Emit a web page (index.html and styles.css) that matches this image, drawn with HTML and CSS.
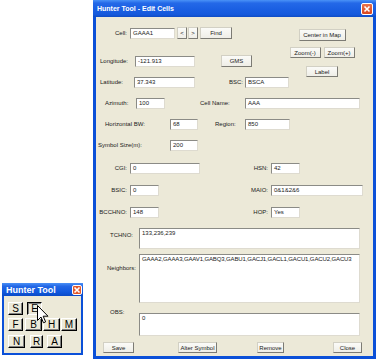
FILE: index.html
```html
<!DOCTYPE html>
<html>
<head>
<meta charset="utf-8">
<link rel="stylesheet" href="styles.css">
</head>
<body>
<div class="desk">
  <div class="side">
    <div class="mini">
      <div class="mtitlebar">
        <span class="mtitle">Hunter Tool</span>
        <span class="mx"><svg width="8" height="8" viewBox="0 0 8 8"><path d="M1.5 1.5 L6.5 6.5 M6.5 1.5 L1.5 6.5" stroke="#fff" stroke-width="1.6"/></svg></span>
      </div>
      <div class="mbody">
        <div class="mrow mr1">
          <span class="kb k15 kfirst">S</span>
          <span class="kb k15 kpressed kgap4">E</span>
        </div>
        <div class="mrow mr2">
          <span class="kb k15 kfirst">F</span>
          <span class="kb k17 kgap2">B</span>
          <span class="kb k17 kgap1">H</span>
          <span class="kb k16 kgap1">M</span>
        </div>
        <div class="mrow mr3">
          <span class="kb k17 kfirst">N</span>
          <span class="kb k13 kgap5">R</span>
          <span class="kb k15 kgap4">A</span>
        </div>
        <svg class="cursor" width="12" height="19" viewBox="0 0 12 19"><path d="M0.5 0.5 L0.5 15.5 L4 12 L6.5 17.8 L8.6 16.9 L6.2 11.2 L11 11.2 Z" fill="#fff" stroke="#000" stroke-width="1"/></svg>
      </div>
    </div>
  </div>

  <div class="win">
    <div class="titlebar">
      <span class="title">Hunter Tool - Edit Cells</span>
      <span class="xbtn"><svg width="8" height="8" viewBox="0 0 8 8"><path d="M1.5 1.5 L6.5 6.5 M6.5 1.5 L1.5 6.5" stroke="#fff" stroke-width="1.6"/></svg></span>
    </div>
    <div class="client">
      <div class="top">
        <div class="topleft">
          <div class="row r1">
            <span class="lbl rt l-cell">Cell:</span>
            <span class="in i-cell">GAAA1</span>
            <span class="btn b-nav b-prev">&lt;</span>
            <span class="btn b-nav b-next">&gt;</span>
            <span class="btn b-find">Find</span>
          </div>
          <div class="row r2">
            <span class="lbl l-lon">Longitude:</span>
            <span class="in i-lon">-121.913</span>
            <span class="btn b-gms">GMS</span>
          </div>
          <div class="row r3">
            <span class="lbl l-lat">Latitude:</span>
            <span class="in i-lat">37.343</span>
            <span class="lbl rt l-bsc">BSC:</span>
            <span class="in i-bsc">BSCA</span>
          </div>
        </div>
        <div class="topright">
          <span class="btn b-center">Center in Map</span>
          <div class="zoomrow">
            <span class="btn b-zoom">Zoom(-)</span>
            <span class="btn b-zoom">Zoom(+)</span>
          </div>
          <span class="btn b-label">Label</span>
        </div>
      </div>

      <div class="row r-az">
        <span class="lbl l-az">Azimuth:</span>
        <span class="in i-az">100</span>
        <span class="lbl l-cname">Cell Name:</span>
        <span class="in i-cname">AAA</span>
      </div>
      <div class="row r-hbw">
        <span class="lbl l-hbw">Horizontal BW:</span>
        <span class="in i-hbw">68</span>
        <span class="lbl l-region">Region:</span>
        <span class="in i-region">850</span>
      </div>
      <div class="row r-sym">
        <span class="lbl l-sym">Symbol Size(m):</span>
        <span class="in i-hbw">200</span>
      </div>
      <div class="row r-cgi">
        <span class="lbl rt l-left">CGI:</span>
        <span class="in i-cgi">0</span>
        <span class="lbl rt l-hsn">HSN:</span>
        <span class="in i-small">42</span>
      </div>
      <div class="row r-bsic">
        <span class="lbl rt l-left">BSIC:</span>
        <span class="in i-small">0</span>
        <span class="lbl rt l-maio">MAIO:</span>
        <span class="in i-maio">0&amp;1&amp;2&amp;6</span>
      </div>
      <div class="row r-bcch">
        <span class="lbl rt l-left">BCCHNO:</span>
        <span class="in i-small">148</span>
        <span class="lbl rt l-maio">HOP:</span>
        <span class="in i-small">Yes</span>
      </div>

      <div class="arow a-tch">
        <span class="lbl l-tch">TCHNO:</span>
        <div class="area h-tch">133,236,239</div>
      </div>
      <div class="arow a-nb">
        <span class="lbl l-nb">Neighbors:</span>
        <div class="area h-nb nbtext">GAAA2,GAAA3,GAAV1,GABQ3,GABU1,GACJ1,GACL1,GACU1,GACU2,GACU3</div>
      </div>
      <div class="arow a-obs">
        <span class="lbl l-obs">OBS:</span>
        <div class="area h-obs">0</div>
      </div>

      <div class="row r-btns">
        <span class="btn b-save">Save</span>
        <span class="btn b-alter">Alter Symbol</span>
        <span class="btn b-remove">Remove</span>
        <span class="btn b-close">Close</span>
      </div>
    </div>
  </div>
</div>
</body>
</html>
```
FILE: styles.css
```css
* { box-sizing: border-box; }
body {
  margin: 0;
  background: #fff;
  font-family: "Liberation Sans", Arial, sans-serif;
  color: #1a1a1a;
}
.desk {
  display: flex;
  width: 376px;
  height: 361px;
  overflow: hidden;
}

/* ---------- small tool window ---------- */
.side {
  width: 93px;
  flex: none;
  display: flex;
  flex-direction: column;
  justify-content: flex-end;
  padding: 0 0 6px 2px;
}
.mini {
  width: 81px;
  height: 72px;
  display: flex;
  flex-direction: column;
}
.mtitlebar {
  height: 13px;
  flex: none;
  background: linear-gradient(to bottom, #4a90f6 0%, #2468e6 25%, #1058de 70%, #0a4ac6 100%);
  display: flex;
  align-items: center;
  padding: 0 1px 0 4px;
}
.mtitle {
  flex: 1;
  color: #fff;
  font-weight: bold;
  font-size: 9px;
  line-height: 10px;
}
.mx {
  width: 10px;
  height: 10px;
  border: 1px solid #fff;
  border-radius: 2px;
  background: #e2582c;
  display: flex;
  align-items: center;
  justify-content: center;
}
.mbody {
  flex: 1;
  position: relative;
  background: #ece9d8;
  border: 2px solid #0b50d8;
  border-top: 0;
  padding-top: 6px;
}
.mrow {
  display: flex;
  height: 13px;
}
.mr2 { margin-top: 3px; }
.mr3 { margin-top: 4px; }
.kb {
  height: 13px;
  display: flex;
  align-items: center;
  justify-content: center;
  font-size: 10px;
  color: #000;
  background: #ece9d8;
  border: 1px solid;
  border-color: #fff #000 #000 #fff;
  box-shadow: inset -1px -1px 0 #808080;
}
.kpressed {
  border-color: #000 #fff #fff #000;
  box-shadow: inset 1px 1px 0 #808080;
}
.k13 { width: 13px; }
.k15 { width: 15px; }
.k16 { width: 16px; }
.k17 { width: 17px; }
.kfirst { margin-left: 4px; }
.kgap1 { margin-left: 1px; }
.kgap2 { margin-left: 2px; }
.kgap4 { margin-left: 4px; }
.kgap5 { margin-left: 5px; }
.cursor {
  position: absolute;
  left: 33px;
  top: 9px;
}

/* ---------- main window ---------- */
.win {
  width: 283px;
  flex: none;
  height: 359px;
  display: flex;
  flex-direction: column;
}
.titlebar {
  height: 17px;
  flex: none;
  background: linear-gradient(to bottom, #4a92f7 0%, #2469e8 18%, #1a5fe2 55%, #1559dc 85%, #0f4cc4 100%);
  display: flex;
  align-items: center;
  padding: 0 3px 0 4px;
}
.title {
  flex: 1;
  color: #fff;
  font-weight: bold;
  font-size: 7px;
  line-height: 9px;
}
.xbtn {
  width: 12px;
  height: 12px;
  border: 1px solid #fff;
  border-radius: 2px;
  background: linear-gradient(#e8734c, #d9461e);
  display: flex;
  align-items: center;
  justify-content: center;
}
.client {
  flex: 1;
  background: #ece9d8;
  border: 3px solid #0b50d8;
  border-top: 0;
  padding-top: 10px;
}

.lbl {
  font-size: 6px;
  line-height: 7px;
  white-space: nowrap;
  flex: none;
}
.rt { text-align: right; padding-right: 3px; }
.in {
  height: 11px;
  flex: none;
  background: #fff;
  border: 1px solid;
  border-color: #8b8b86 #dedbd0 #dedbd0 #8b8b86;
  font-size: 6px;
  line-height: 9px;
  padding-left: 2px;
  white-space: nowrap;
  overflow: hidden;
}
.btn {
  height: 12px;
  flex: none;
  display: flex;
  align-items: center;
  justify-content: center;
  font-size: 6px;
  color: #1a1a1a;
  background: linear-gradient(#fbfbf8, #efeee7);
  border: 1px solid;
  border-color: #d2d0c4 #7c7b74 #7c7b74 #d2d0c4;
  white-space: nowrap;
}

.top { display: flex; }
.topleft { width: 193px; flex: none; }
.topright {
  width: 66px;
  flex: none;
  display: flex;
  flex-direction: column;
  align-items: center;
}
.row { display: flex; align-items: center; height: 11px; }
.r1 { height: 12px; }
.r2 { height: 12px; margin-top: 16px; }
.r3 { margin-top: 10px; }

.l-cell { width: 34px; }
.i-cell { width: 45px; }
.b-nav { width: 10px; }
.b-prev { margin-left: 2px; }
.b-next { margin-left: 1px; }
.b-find { width: 32px; margin-left: 2px; }
.l-lon { margin-left: 4px; width: 35px; }
.i-lon { width: 60px; }
.b-gms { width: 31px; margin-left: 26px; }
.l-lat { margin-left: 4px; width: 34px; }
.i-lat { width: 61px; }
.l-bsc { width: 50px; padding-right: 2px; }
.i-bsc { width: 44px; }

.b-center { width: 47px; margin-top: 2px; }
.zoomrow { display: flex; gap: 3px; margin-top: 6px; }
.b-zoom { width: 31px; height: 11px; }
.b-label { width: 32px; height: 11px; margin-top: 8px; }

.r-az { margin-top: 10px; }
.l-az { margin-left: 9px; width: 31px; }
.i-az { width: 29px; }
.l-cname { margin-left: 35px; width: 45px; }
.i-cname { width: 115px; }
.r-hbw { margin-top: 10px; }
.l-hbw { margin-left: 9px; width: 65px; }
.i-hbw { width: 28px; }
.l-region { margin-left: 17px; width: 30px; }
.i-region { width: 45px; }
.r-sym { margin-top: 10px; }
.l-sym { margin-left: 2px; width: 72px; }
.r-cgi { margin-top: 12px; }
.l-left { width: 34px; }
.i-cgi { width: 70px; }
.l-hsn { width: 71px; }
.i-small { width: 29px; }
.r-bsic { margin-top: 11px; }
.l-maio { width: 112px; }
.i-maio { width: 92px; }
.r-bcch { margin-top: 11px; }

.arow { display: flex; align-items: flex-start; }
.area {
  width: 221px;
  flex: none;
  background: #fff;
  border: 1px solid;
  border-color: #8b8b86 #dedbd0 #dedbd0 #8b8b86;
  font-size: 6px;
  line-height: 7px;
  padding: 1px 2px;
  white-space: nowrap;
  overflow: hidden;
}
.nbtext { letter-spacing: -0.12px; }
.a-tch { margin-top: 10px; }
.l-tch { margin-left: 14px; width: 29px; padding-top: 4px; }
.h-tch { height: 21px; }
.a-nb { margin-top: 5px; }
.l-nb { margin-left: 11px; width: 32px; padding-top: 11px; }
.h-nb { height: 49px; }
.a-obs { margin-top: 10px; }
.l-obs { margin-left: 14px; width: 29px; margin-top: -4px; }
.h-obs { height: 23px; }

.r-btns { margin-top: 6px; }
.r-btns .btn { height: 11px; }
.b-save { width: 31px; margin-left: 7px; }
.b-alter { width: 39px; margin-left: 44px; }
.b-remove { width: 27px; margin-left: 40px; }
.b-close { width: 29px; margin-left: 49px; }
```
